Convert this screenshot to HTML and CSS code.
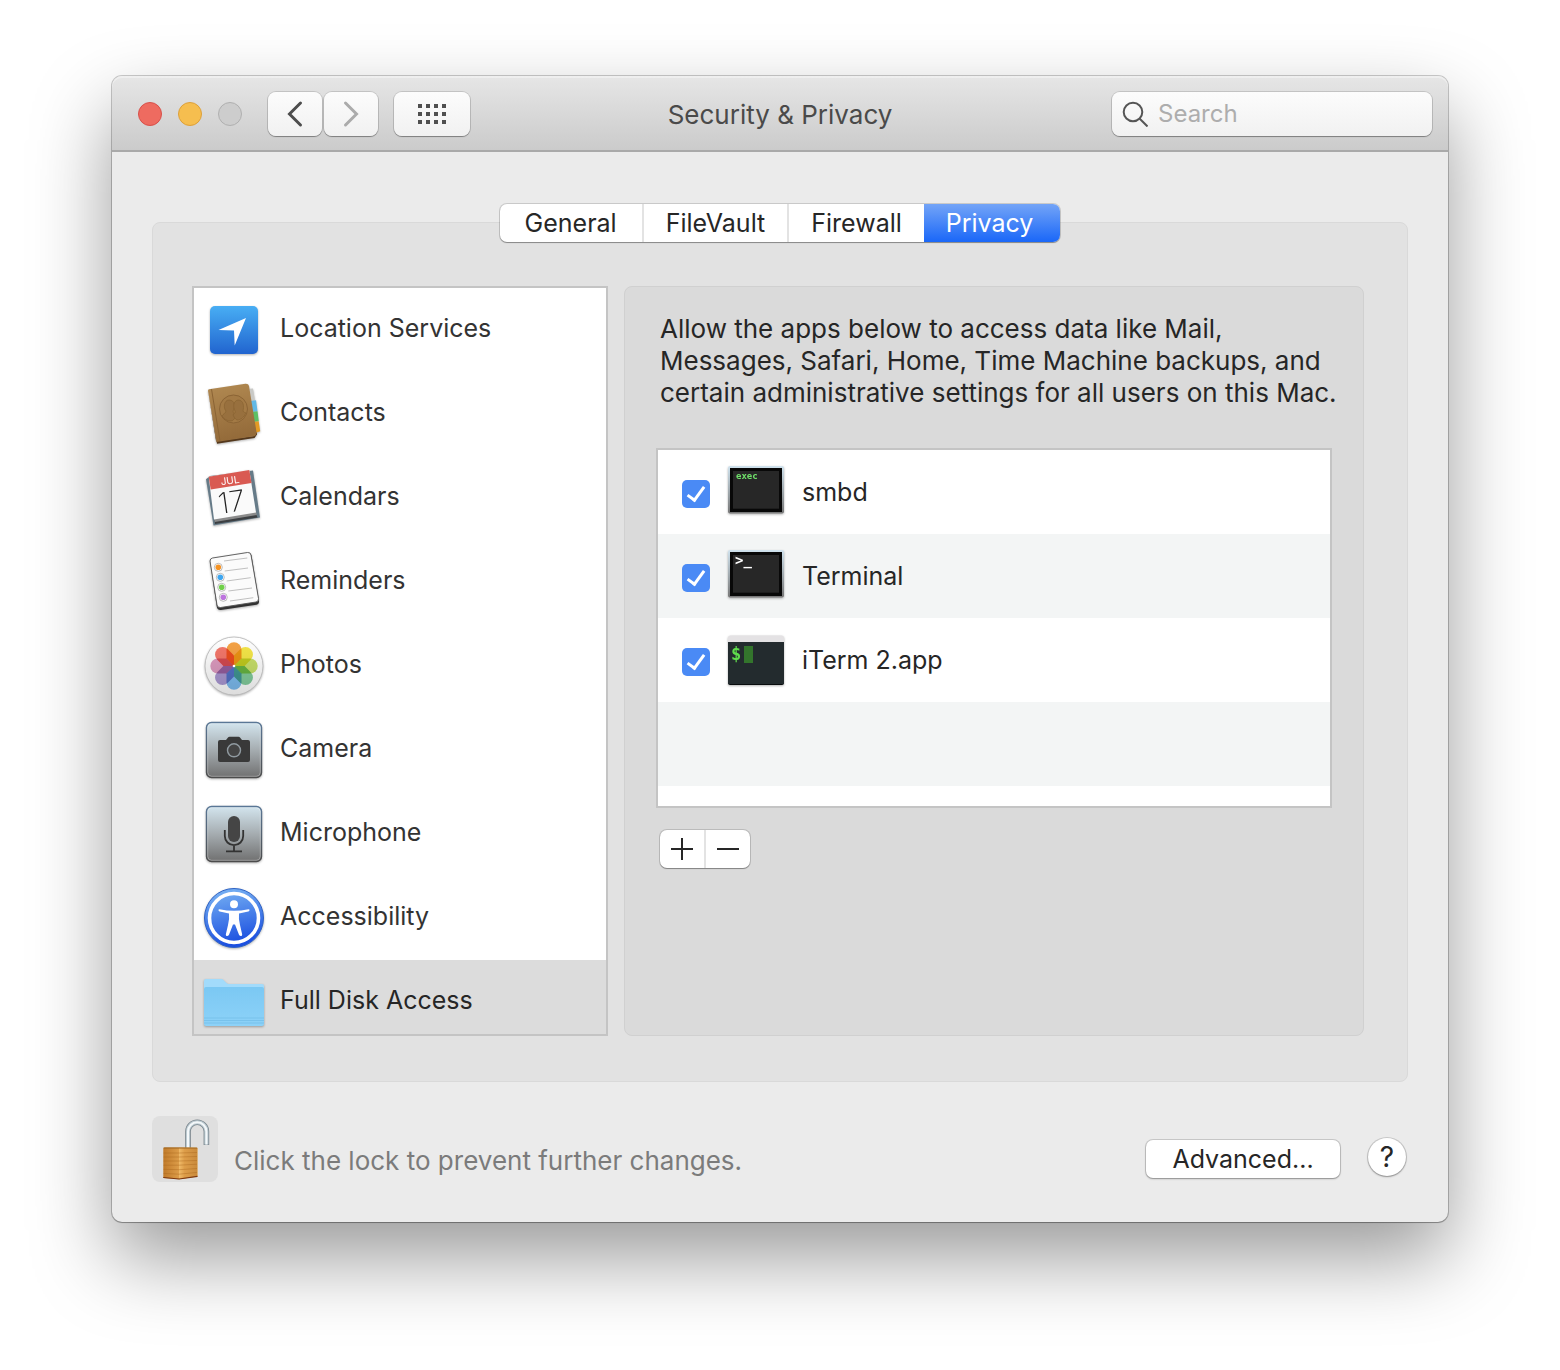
FILE: index.html
```html
<!DOCTYPE html>
<html lang="en">
<head>
<meta charset="utf-8">
<meta name="viewport" content="width=device-width, initial-scale=1">
<title>Security &amp; Privacy</title>
<link rel="stylesheet" href="styles.css">
</head>
<body>
<div class="window">
  <header class="toolbar">
    <div class="toolbar-left">
      <div class="lights">
        <button class="light light-close" aria-label="Close"></button>
        <button class="light light-minimize" aria-label="Minimize"></button>
        <button class="light light-zoom" aria-label="Zoom" disabled></button>
      </div>
      <div class="history">
        <button class="tool-button" aria-label="Back">
          <svg width="24" height="28" viewBox="0 0 24 28"><path d="M17.500 3 6.500 14l11 11" fill="none" stroke="#4d4d4d" stroke-width="3" stroke-linecap="round"/></svg>
        </button>
        <button class="tool-button" aria-label="Forward" disabled>
          <svg width="24" height="28" viewBox="0 0 24 28"><path d="M6.500 3l11 11-11 11" fill="none" stroke="#ababab" stroke-width="3" stroke-linecap="round"/></svg>
        </button>
      </div>
      <button class="tool-button tool-button-wide" aria-label="Show all">
        <svg width="28" height="20" viewBox="0 0 28 20" fill="#4f4f4f"><path d="M0 0h4v4H0zM8 0h4v4H8zM16 0h4v4h-4zM24 0h4v4h-4zM0 8h4v4H0zM8 8h4v4H8zM16 8h4v4h-4zM24 8h4v4h-4zM0 16h4v4H0zM8 16h4v4H8zM16 16h4v4h-4zM24 16h4v4h-4z"/></svg>
      </button>
    </div>
    <h1 class="title">Security &amp; Privacy</h1>
    <label class="search">
      <svg width="26" height="26" viewBox="0 0 26 26" fill="none" stroke="#555" stroke-width="2"><circle cx="11" cy="11" r="9.300"/><path d="M17.500 17.500l8 8"/></svg>
      <input class="search-input" type="search" placeholder="Search" aria-label="Search">
    </label>
  </header>

  <main class="content">
    <div class="tabs" role="tablist">
      <button class="tab" role="tab">General</button>
      <button class="tab" role="tab">FileVault</button>
      <button class="tab" role="tab">Firewall</button>
      <button class="tab tab-active" role="tab" aria-selected="true">Privacy</button>
    </div>

    <section class="panel">
      <nav class="categories">
        <a class="category" href="#location">
          <svg class="icon" viewBox="0 0 64 64">
            <defs><linearGradient id="loc" x2="0" y2="1"><stop stop-color="#48aef4"/><stop offset="1" stop-color="#2164cf"/></linearGradient></defs>
            <rect x="8" y="8" width="48" height="48" rx="5" fill="url(#loc)"/>
            <path d="M44 20 16.500 32 32 32.400l.7 15z" fill="#fff"/>
          </svg>
          <span class="category-name">Location Services</span>
        </a>
        <a class="category" href="#contacts">
          <svg class="icon" viewBox="0 0 64 64">
            <defs><linearGradient id="book" x2="0.200" y2="1"><stop stop-color="#b28a52"/><stop offset="1" stop-color="#946b3a"/></linearGradient></defs>
            <path d="M46 7l5-.5 2 12-5 1z" fill="#c9c9c6"/>
            <path d="M48 19l6-.8 1.500 11-6 .8z" fill="#62b9e6"/>
            <path d="M50 30l5.500-.8 1.300 10-5.500.8z" fill="#5cc065"/>
            <path d="M51 40l5.700-.8 1.500 10-5 1.800z" fill="#e39a24"/>
            <path d="M6 8l8 51 38-5 3-4v2.500L52.500 56 15 61.700z" fill="#54381c"/>
            <path d="M6 8.500Q6 7.500 7 7.300L43.500 1.700Q46.500 1.500 47 4L54.500 50Q54.800 53.500 52 54.200L14.500 60z" fill="url(#book)"/>
            <path d="M9.500 7.200 18 59" stroke="#8a6334" stroke-width="1"/>
            <circle cx="31.500" cy="27" r="14" fill="#a37a45" stroke="#8b6435"/>
            <g fill="#98703e" stroke="#85602f" stroke-width=".6">
              <path d="M20 34c1-2 4-3 4-5-3-3-2-11 3-11 6 0 7 7 4 11 0 3 3 3 3 6-2 2-3 4-5 4-4 0-7-2-9-5z"/>
              <path d="M31 33c1-2 3-2 2-4-2-4-2-10 3-11 6 0 6 7 5 11 1 2 2 1 3 2-2 4-5 7-9 7-2-1-3-3-4-5z"/>
            </g>
          </svg>
          <span class="category-name">Contacts</span>
        </a>
        <a class="category" href="#calendars">
          <svg class="icon" viewBox="0 0 64 64">
            <path d="M4 13.300 8 10l43-5.500 7 47-46.500 8z" fill="#667b88"/>
            <path d="M8 12l46 36 1.500 3.500L13 58z" fill="#3c3f42"/>
            <path d="M12 52l42-7 .8 4-42 7z" fill="#8b8b8b"/>
            <path d="M6.700 10.700 47.300 4 54 46.500 12 53.500z" fill="#fafafa"/>
            <path d="M6.700 10.700 47.300 4l2.200 13L8.700 23.400z" fill="#d95a52"/>
            <text class="cal-month" x="28.500" y="18" transform="rotate(-8 28.500 18)">JUL</text>
            <text class="cal-day" x="31" y="46" transform="rotate(-8 31 46)">17</text>
          </svg>
          <span class="category-name">Calendars</span>
        </a>
        <a class="category" href="#reminders">
          <svg class="icon" viewBox="0 0 64 64">
            <path d="M8 11Q8 9 10 8.700L46 3q3-.4 3.500 2.500L57 51q.4 3-2.500 3.800L19 60q-3.500.4-4.200-3z" fill="#333"/>
            <path d="M8 11Q8 8.500 10.500 8L45.500 2.500q3-.4 3.500 2.500l7.500 43.500q.4 3-2.500 3.500L18.500 57.500q-3 .4-3.500-2.500z" fill="#fbfbfb" stroke="#555" stroke-width=".9"/>
            <path d="M22 11l23.300-3M22.700 21 46 18M24.700 31l24-3.300M26.300 41 50 38M28 51l23.300-3.300" stroke="#b9b9b9" stroke-width=".9"/>
            <g fill="#fff" stroke="#aaa" stroke-width=".8"><circle cx="16.300" cy="17.300" r="4"/><circle cx="18.300" cy="27.300" r="4"/><circle cx="19.700" cy="37.300" r="4"/><circle cx="21.300" cy="47.300" r="4"/></g>
            <circle cx="16.300" cy="17.300" r="2.800" fill="#f59324"/><circle cx="18.300" cy="27.300" r="2.800" fill="#3ea6f0"/><circle cx="19.700" cy="37.300" r="2.800" fill="#70d04a"/><circle cx="21.300" cy="47.300" r="2.800" fill="#bc74dd"/>
          </svg>
          <span class="category-name">Reminders</span>
        </a>
        <a class="category" href="#photos">
          <svg class="icon" viewBox="0 0 64 64">
            <defs>
              <linearGradient id="disc" x2="0" y2="1"><stop stop-color="#fff"/><stop offset="1" stop-color="#dcdcdc"/></linearGradient>
              <path id="petal" d="M0 0-7.500-7.500V-16.200A7.500 7.500 0 0 1 7.500-16.200V-7.500z"/>
            </defs>
            <circle cx="32" cy="32" r="29" fill="url(#disc)" stroke="#b5b5b5" stroke-width=".8"/>
            <g transform="translate(32 32)">
              <use href="#petal" class="petal" fill="#f6a345"/>
              <use href="#petal" class="petal" fill="#f5e748" transform="rotate(45)"/>
              <use href="#petal" class="petal" fill="#c8e06a" transform="rotate(90)"/>
              <use href="#petal" class="petal" fill="#82cc9c" transform="rotate(135)"/>
              <use href="#petal" class="petal" fill="#7dbcf0" transform="rotate(180)"/>
              <use href="#petal" class="petal" fill="#aa98d2" transform="rotate(225)"/>
              <use href="#petal" class="petal" fill="#dd9bc0" transform="rotate(270)"/>
              <use href="#petal" class="petal" fill="#f4776a" transform="rotate(315)"/>
              <circle r="1.300" fill="#fff"/>
            </g>
          </svg>
          <span class="category-name">Photos</span>
        </a>
        <a class="category" href="#camera">
          <svg class="icon" viewBox="0 0 64 64">
            <defs>
              <linearGradient id="steel" x2="0" y2="1"><stop stop-color="#d3e5ee"/><stop offset=".5" stop-color="#a5acb0"/><stop offset="1" stop-color="#707070"/></linearGradient>
              <linearGradient id="rim" x2="0" y2="1"><stop stop-color="#5a7796"/><stop offset="1" stop-color="#4c4c4c"/></linearGradient>
            </defs>
            <rect x="4.500" y="4.500" width="55" height="55" rx="5" fill="url(#steel)" stroke="url(#rim)" stroke-width="1.400"/>
            <rect x="5.700" y="5.700" width="52.600" height="52.600" rx="4" fill="none" stroke="#fff" stroke-opacity=".3"/>
            <path d="M18 22h6l2-2.500q.5-.7 1.500-.7h9q1 0 1.500.7L40 22h6q2 0 2 2v18q0 2-2 2H18q-2 0-2-2V24q0-2 2-2z" fill="#393939"/>
            <circle cx="32" cy="32.300" r="6.500" fill="#444" stroke="#909aa0" stroke-width="1.400"/>
          </svg>
          <span class="category-name">Camera</span>
        </a>
        <a class="category" href="#microphone">
          <svg class="icon" viewBox="0 0 64 64">
            <rect x="4.500" y="4.500" width="55" height="55" rx="5" fill="url(#steel)" stroke="url(#rim)" stroke-width="1.400"/>
            <rect x="5.700" y="5.700" width="52.600" height="52.600" rx="4" fill="none" stroke="#fff" stroke-opacity=".3"/>
            <rect x="26" y="14" width="12" height="26" rx="6" fill="#454545"/>
            <path d="M22.800 28v6a9.200 9.200 0 0 0 18.400 0v-6M32 43.500V49M24 49.300h16" fill="none" stroke="#333" stroke-width="1.800"/>
          </svg>
          <span class="category-name">Microphone</span>
        </a>
        <a class="category" href="#accessibility">
          <svg class="icon" viewBox="0 0 64 64">
            <defs><linearGradient id="acc" x2="0.200" y2="1"><stop stop-color="#7db8f4"/><stop offset="1" stop-color="#1b4fe0"/></linearGradient></defs>
            <circle cx="32" cy="32" r="29.500" fill="url(#acc)" stroke="#2f62c4"/>
            <circle cx="32" cy="32" r="24.500" fill="none" stroke="#fff" stroke-width="3.600"/>
            <circle cx="32" cy="18.200" r="4" fill="#fff"/>
            <path d="M17.500 23.200Q25 24.800 32 24.800T46.500 23.200q1.300 0 1 1.100-.1.800-1.200 1.100L37 27.600q-.6 6 1 11.400l2.200 9.500q0 1.500-1.200 1.500-1.300 0-2-1.300L33 38.500h-2l-4 10.200Q26.300 50 25 50q-1.200 0-1.200-1.500L26 39q1.600-5.400 1-11.400l-9.300-2.200q-1.100-.3-1.200-1.100-.3-1.100 1-1.100z" fill="#fff"/>
          </svg>
          <span class="category-name">Accessibility</span>
        </a>
        <a class="category category-active" href="#full-disk-access" aria-current="true">
          <svg class="icon" viewBox="0 0 64 64">
            <defs><linearGradient id="fold" x2="0" y2="1"><stop stop-color="#7bc8f3"/><stop offset="1" stop-color="#8dd2f8"/></linearGradient></defs>
            <path d="M2 11q0-2 2-2h15q1.500 0 2.500 1l3 3q1 1 2.500 1H60q2 0 2 2v10H2z" fill="#a2dbfb"/>
            <path d="M2 19q0-2 2-2h56q2 0 2 2v35q0 2-2 2H4q-2 0-2-2z" fill="url(#fold)"/>
            <path d="M2 48h60M2 50.500h60M2 53h60" stroke="#6bb8e4" stroke-width=".6"/>
          </svg>
          <span class="category-name">Full Disk Access</span>
        </a>
      </nav>

      <section class="detail">
        <p class="description">Allow the apps below to access data like Mail, Messages, Safari, Home, Time Machine backups, and certain administrative settings for all users on this Mac.</p>
        <ul class="apps">
          <li class="app">
            <input class="app-check" type="checkbox" id="app-smbd" checked>
            <label class="app-label" for="app-smbd">
              <svg class="icon" viewBox="0 0 64 64">
                <defs><linearGradient id="frame" x2="0" y2="1"><stop stop-color="#d0e3ee"/><stop offset="1" stop-color="#777"/></linearGradient></defs>
                <rect x="4" y="6" width="56" height="47.500" rx="2" fill="url(#frame)"/>
                <rect x="6" y="8" width="52" height="44" fill="#080808"/>
                <rect x="9" y="11" width="46" height="37.700" fill="#272727"/>
                <text class="mono-exec" x="12" y="19">exec</text>
              </svg>
              <span>smbd</span>
            </label>
          </li>
          <li class="app">
            <input class="app-check" type="checkbox" id="app-terminal" checked>
            <label class="app-label" for="app-terminal">
              <svg class="icon" viewBox="0 0 64 64">
                <rect x="4" y="6" width="56" height="47.500" rx="2" fill="url(#frame)"/>
                <rect x="6" y="8" width="52" height="44" fill="#080808"/>
                <rect x="9" y="11" width="46" height="37.700" fill="#272727"/>
                <text class="mono-prompt" x="11" y="21">&gt;_</text>
              </svg>
              <span>Terminal</span>
            </label>
          </li>
          <li class="app">
            <input class="app-check" type="checkbox" id="app-iterm" checked>
            <label class="app-label" for="app-iterm">
              <svg class="icon" viewBox="0 0 64 64">
                <path d="M4 14V10q0-2.500 2.500-2.500h51Q60 7.500 60 10v4z" fill="#e4e2e4"/>
                <path d="M4 14h56v41q0 2-2 2H6q-2 0-2-2z" fill="#080c0d"/>
                <path d="M4 14h56v42H4z" fill="#232b2e"/>
                <text class="mono-dollar" x="7" y="32">$</text>
                <path d="M20 18h9v17h-9z" fill="#33752c"/>
              </svg>
              <span>iTerm 2.app</span>
            </label>
          </li>
        </ul>
        <div class="add-remove">
          <button class="small-button" aria-label="Add"><svg width="22" height="22" viewBox="0 0 22 22"><path d="M0 11h22M11 0v22" stroke="#262626" stroke-width="2"/></svg></button>
          <button class="small-button" aria-label="Remove"><svg width="22" height="22" viewBox="0 0 22 22"><path d="M0 11h22" stroke="#262626" stroke-width="2"/></svg></button>
        </div>
      </section>
    </section>

    <footer class="footer">
      <button class="lock" aria-label="Lock">
        <svg width="66" height="66" viewBox="0 0 66 66">
          <defs>
            <linearGradient id="brassL"><stop stop-color="#c07a2a"/><stop offset=".6" stop-color="#e5a752"/><stop offset="1" stop-color="#fbdc98"/></linearGradient>
            <linearGradient id="brassR"><stop stop-color="#f0bb69"/><stop offset=".3" stop-color="#dd9d49"/><stop offset="1" stop-color="#c98a3b"/></linearGradient>
          </defs>
          <path d="M36 33V15.500a9.200 9.200 0 0 1 18.400 0V29" fill="none" stroke="#77838a" stroke-width="5.600"/>
          <path d="M36 33V15.500a9.200 9.200 0 0 1 18.400 0V28.500" fill="none" stroke="#bccad1" stroke-width="4"/>
          <path d="M36 33V15.500a9.200 9.200 0 0 1 18.400 0V28.500" fill="none" stroke="#f4f8fa" stroke-width="2"/>
          <path d="M11.300 32.500l1.200-1H44l1.500 1V60.500L27 63.300 11.300 62z" fill="url(#brassL)"/>
          <path d="M27 32h18.500v28.500L27 63.300z" fill="url(#brassR)"/>
          <path d="M11.500 37H27l18-.5M11.500 41H27l18-.5M11.500 45H27l18-.5M11.500 49.200H27l18-1M11.500 53.300l15.500.4 18-1.200M11.500 57.400l15.500.8 18-1.800" fill="none" stroke="#a8641c" stroke-opacity=".4"/>
          <path d="M11.300 61.500l15.700 1.500 18.500-2.700" fill="none" stroke="#7a3710" stroke-width="1.200"/>
          <path d="M11.500 32h33.700" stroke="#9b621f" stroke-width="1"/>
        </svg>
      </button>
      <p class="lock-note">Click the lock to prevent further changes.</p>
      <button class="push-button">Advanced...</button>
      <button class="help" aria-label="Help">?</button>
    </footer>
  </main>
</div>
</body>
</html>
```

FILE: styles.css
```css
* {
  box-sizing: border-box;
}

body {
  margin: 0;
  padding: 76px 112px 148px;
  background: #fff;
  color: #262626;
  font-family: Inter, "Liberation Sans", sans-serif;
  font-size: 25px;
  line-height: 32px;
}

button,
input {
  margin: 0;
  padding: 0;
  border: 0;
  color: inherit;
  font: inherit;
}

h1,
p,
ul {
  margin: 0;
  padding: 0;
}

svg {
  display: block;
  flex: none;
}

.window {
  border-radius: 10px;
  background: #ebebeb;
  box-shadow: 0 0 0 1px rgba(0, 0, 0, .2), 0 1px 1px rgba(0, 0, 0, .2), 0 36px 80px rgba(0, 0, 0, .4);
}

/* Toolbar */
.toolbar {
  display: grid;
  grid-template-columns: 1fr auto 1fr;
  align-items: center;
  height: 76px;
  padding: 2px 16px 0;
  border-bottom: 2px solid #a9a9a9;
  border-radius: 10px 10px 0 0;
  background: linear-gradient(#e6e6e6, #cbcbcb);
  box-shadow: inset 0 2px 0 rgba(255, 255, 255, .35);
}

.toolbar-left,
.lights,
.history {
  display: flex;
  align-items: center;
}

.lights {
  gap: 16px;
  margin: 0 26px 0 10px;
}

.history {
  gap: 2px;
  margin-right: 16px;
}

.light {
  width: 24px;
  height: 24px;
  border: 1px solid #d8504a;
  border-radius: 50%;
  background: #ee6b60;
}

.light-minimize {
  border-color: #dda03a;
  background: #f6be4f;
}

.light-zoom {
  border-color: #b0b0b0;
  background: #cdcdcd;
}

.tool-button,
.search {
  border-radius: 8px;
  background: linear-gradient(#fcfcfc, #f1f1f1);
  box-shadow: 0 0 0 1px rgba(0, 0, 0, .13), 0 1px 1px rgba(0, 0, 0, .3);
}

.tool-button {
  display: flex;
  align-items: center;
  justify-content: center;
  width: 54px;
  height: 44px;
}

.tool-button-wide {
  width: 76px;
}

.title {
  padding-top: 2px;
  color: #4a4a4a;
  font-size: 26px;
  font-weight: 400;
}

.search {
  display: flex;
  align-items: center;
  justify-self: end;
  gap: 10px;
  width: 320px;
  height: 44px;
  padding: 0 10px;
}

.search-input {
  flex: 1;
  min-width: 0;
  background: none;
  outline: none;
  font-size: 24px;
}

.search-input::placeholder {
  color: #adadad;
  opacity: 1;
}

/* Tabs */
.content {
  padding: 52px 40px 40px;
}

.tabs,
.add-remove {
  display: flex;
  width: fit-content;
  border-radius: 7px;
  background: #fff;
  box-shadow: 0 0 0 1px rgba(0, 0, 0, .14), 0 1px 1px rgba(0, 0, 0, .3);
}

.tabs {
  position: relative;
  margin: 0 auto -20px;
}

.tab {
  height: 38px;
  padding: 0 22px;
  border-right: 2px solid #e3e3e3;
  background: none;
}

.tab:first-child {
  padding: 0 25px;
}

.tab:nth-last-child(2) {
  border-right: 0;
}

.tab-active {
  padding-right: 27px;
  border-right: 0;
  border-radius: 0 7px 7px 0;
  background: linear-gradient(#73a4f7, #1a67f8);
  color: #fff;
}

/* Main panel */
.panel {
  display: grid;
  grid-template-columns: 416px 1fr;
  gap: 16px;
  padding: 63px 43px 45px 39px;
  border: 1px solid #d9d9d9;
  border-radius: 8px;
  background: #e2e2e2;
}

.categories {
  height: 750px;
  overflow-y: auto;
  border: 2px solid #c4c4c4;
  background: #fff;
  scrollbar-width: none;
}

.category {
  display: flex;
  align-items: center;
  gap: 14px;
  height: 84px;
  padding-left: 8px;
  color: #333;
  text-decoration: none;
}

.category-active {
  background: #dcdcdc;
  color: #262626;
}

.category-name {
  padding-bottom: 4px;
}

.icon {
  width: 64px;
  height: 64px;
  filter: drop-shadow(0 1px 1px rgba(0, 0, 0, .3));
}

.petal {
  mix-blend-mode: multiply;
}

.cal-month,
.cal-day {
  font-size: 10px;
  text-anchor: middle;
  fill: #fff;
}

.cal-day {
  font-size: 29px;
  font-weight: 200;
  fill: #222;
}

.mono-exec,
.mono-prompt,
.mono-dollar {
  font-family: "DejaVu Sans Mono", monospace;
  font-size: 9px;
  font-weight: 700;
  fill: #6fe06a;
}

.mono-prompt {
  font-size: 14px;
  fill: #fff;
}

.mono-dollar {
  font-size: 17px;
  fill: #5fdc4c;
}

/* Detail pane */
.detail {
  padding: 26px 15px 26px 31px;
  border: 1px solid #d0d0d0;
  border-radius: 8px;
  background: #dadada;
}

.description {
  padding-left: 4px;
  font-size: 26px;
}

.apps {
  height: 360px;
  margin: 39px 16px 22px 0;
  overflow: hidden;
  border: 2px solid #c4c4c4;
  background: repeating-linear-gradient(#fff 0 84px, #f3f5f5 84px 168px);
  list-style: none;
}

.app {
  display: flex;
  align-items: center;
  gap: 14px;
  height: 84px;
  padding-left: 24px;
}

.app-check {
  display: grid;
  place-content: center;
  width: 28px;
  height: 28px;
  margin-top: 4px;
  border-radius: 5px;
  background: #4a8af5;
  appearance: none;
}

.app-check:checked::before {
  content: "";
  box-sizing: border-box;
  width: 10px;
  height: 18px;
  margin-bottom: 4px;
  border: solid #fff;
  border-width: 0 3px 3px 0;
  transform: rotate(36deg);
}

.app-label {
  display: flex;
  align-items: center;
  gap: 14px;
}

.add-remove {
  margin-left: 4px;
}

.small-button {
  display: flex;
  align-items: center;
  justify-content: center;
  width: 44px;
  height: 38px;
  background: none;
}

.small-button + .small-button {
  width: 46px;
  border-left: 2px solid #e3e3e3;
}

/* Footer */
.footer {
  display: flex;
  align-items: center;
  margin-top: 34px;
}

.lock {
  width: 66px;
  height: 66px;
  border-radius: 8px;
  background: #dfdfdf;
}

.lock-note {
  flex: 1;
  padding: 24px 0 0 16px;
  color: #7b7b7b;
  font-size: 26px;
}

.push-button,
.help {
  margin-top: 20px;
  border-radius: 7px;
  background: #fff;
  box-shadow: 0 0 0 1px rgba(0, 0, 0, .14), 0 1px 2px rgba(0, 0, 0, .3);
}

.push-button {
  width: 194px;
  height: 38px;
  margin-right: 28px;
}

.help {
  width: 38px;
  height: 38px;
  margin: 16px 2px 0 0;
  border-radius: 50%;
  font-size: 28px;
}
```
